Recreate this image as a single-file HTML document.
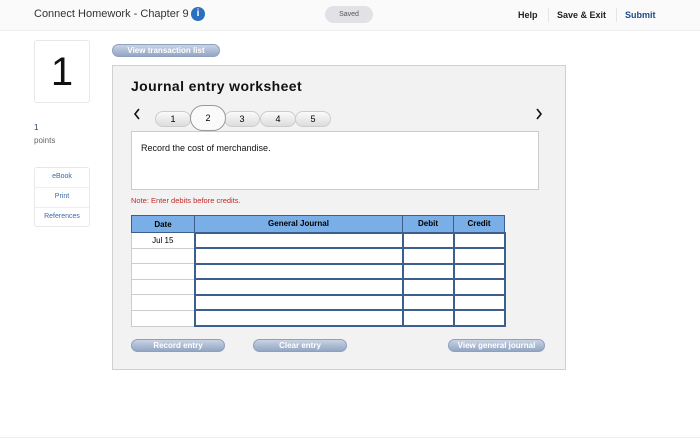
<!DOCTYPE html>
<html><head><style>
*{margin:0;padding:0;box-sizing:border-box}
body{width:700px;height:441px;background:#fff;font-family:"Liberation Sans",sans-serif;position:relative;overflow:hidden}
.a{position:absolute}
.hdr{left:0;top:0;width:700px;height:31px;background:#fafafa;border-bottom:1px solid #eee}
.btn{position:absolute;height:13px;border-radius:7px;background:linear-gradient(#c8d3e4,#93a6c3);color:#fff;font-size:8px;font-weight:bold;text-align:center;line-height:12px;border:1px solid #8ea0bd}
.pill{position:absolute;top:111px;height:16px;width:36px;border-radius:8px;background:linear-gradient(#fafafa,#ddd);border:1px solid #ccc;font-size:9px;text-align:center;line-height:15px}
table{border-collapse:collapse;position:absolute;left:131px;top:215px}
td{border:1px solid #ccc;height:15.6px;padding:0;font-size:8px;text-align:center;background:#fff}
th{background:#7aaee6;border:1px solid #3d5f8d;font-size:8px;height:17px}
td.i{border:2px solid #3d5f8d}
</style></head><body>
<div class="a hdr"></div>
<div class="a" style="left:34px;top:8px;font-size:11px;color:#333">Connect Homework - Chapter 9</div>
<div class="a" style="left:191px;top:7px;width:14px;height:14px;border-radius:50%;background:#2a6fc0;color:#fff;font-size:10px;font-weight:bold;text-align:center;line-height:14px">i</div>
<div class="a" style="left:325px;top:6px;width:48px;height:17px;border-radius:9px;background:#e2e2e6;font-size:7px;color:#555;text-align:center;line-height:17px">Saved</div>
<div class="a" style="left:518px;top:10px;font-size:9px;font-weight:bold;color:#222">Help</div>
<div class="a" style="left:548px;top:8px;width:1px;height:14px;background:#e5e5e5"></div>
<div class="a" style="left:557px;top:10px;font-size:9px;font-weight:bold;color:#222">Save &amp; Exit</div>
<div class="a" style="left:616px;top:8px;width:1px;height:14px;background:#e5e5e5"></div>
<div class="a" style="left:625px;top:10px;font-size:9px;font-weight:bold;color:#1b4a8a">Submit</div>
<div class="a" style="left:34px;top:40px;width:56px;height:63px;border:1px solid #e8e8e8;border-radius:3px;font-size:40px;text-align:center;line-height:63px;color:#111">1</div>
<div class="a" style="left:34px;top:123px;font-size:8px;color:#1b3a6a">1</div>
<div class="a" style="left:34px;top:136px;font-size:8px;color:#666">points</div>
<div class="a" style="left:34px;top:167px;width:56px;height:60px;border:1px solid #e8e8e8;border-radius:3px;font-size:7px;color:#3a6aa8;text-align:center">
<div style="height:20px;line-height:18px;border-bottom:1px solid #eee">eBook</div>
<div style="height:20px;line-height:18px;border-bottom:1px solid #eee">Print</div>
<div style="height:19px;line-height:18px">References</div></div>
<div class="btn" style="left:112px;top:44px;width:108px">View transaction list</div>
<div class="a" style="left:112px;top:65px;width:454px;height:305px;background:#f2f2f2;border:1px solid #d0d0d0"></div>
<div class="a" style="left:131px;top:78px;font-size:14px;font-weight:bold;color:#111;letter-spacing:0.4px">Journal entry worksheet</div>
<svg class="a" style="left:133px;top:108px" width="8" height="12"><path d="M6 1 L2 6 L6 11" stroke="#111" stroke-width="1.6" fill="none"/></svg>
<svg class="a" style="left:535px;top:108px" width="8" height="12"><path d="M2 1 L6 6 L2 11" stroke="#111" stroke-width="1.6" fill="none"/></svg>
<div class="pill" style="left:155px">1</div>
<div class="pill" style="left:224px">3</div>
<div class="pill" style="left:260px">4</div>
<div class="pill" style="left:295px">5</div>
<div class="pill" style="left:190px;top:105px;height:26px;width:36px;border-radius:13px;background:#fafafa;border-color:#999;line-height:25px">2</div>
<div class="a" style="left:131px;top:131px;width:408px;height:59px;background:#fff;border:1px solid #ccc;font-size:9px;padding:11px 9px;color:#111">Record the cost of merchandise.</div>
<div class="a" style="left:131px;top:196px;font-size:7.5px;color:#c02a2a">Note: Enter debits before credits.</div>
<table>
<tr><th style="width:63px">Date</th><th style="width:208px">General Journal</th><th style="width:51px">Debit</th><th style="width:51px">Credit</th></tr>
<tr><td>Jul 15</td><td class="i"></td><td class="i"></td><td class="i"></td></tr>
<tr><td></td><td class="i"></td><td class="i"></td><td class="i"></td></tr>
<tr><td></td><td class="i"></td><td class="i"></td><td class="i"></td></tr>
<tr><td></td><td class="i"></td><td class="i"></td><td class="i"></td></tr>
<tr><td></td><td class="i"></td><td class="i"></td><td class="i"></td></tr>
<tr><td></td><td class="i"></td><td class="i"></td><td class="i"></td></tr>
</table>
<div class="btn" style="left:131px;top:339px;width:94px">Record entry</div>
<div class="btn" style="left:253px;top:339px;width:94px">Clear entry</div>
<div class="btn" style="left:448px;top:339px;width:97px">View general journal</div>
<div class="a" style="left:0;top:437px;width:700px;height:1px;background:#eee"></div>
</body></html>
